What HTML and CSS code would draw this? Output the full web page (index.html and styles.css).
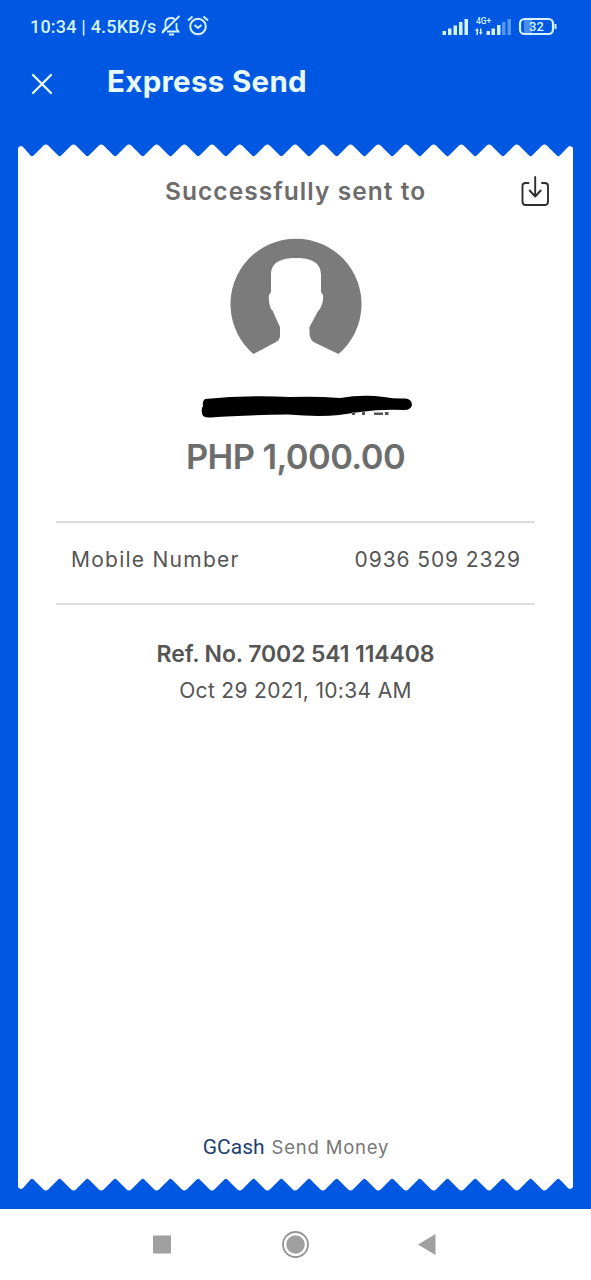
FILE: index.html
```html
<!DOCTYPE html>
<html lang="en">
<head>
<meta charset="utf-8">
<title>Express Send</title>
<link rel="stylesheet" href="styles.css">
</head>
<body>
<div class="screen">
  <header class="status">
    <span class="clock">10:34 | 4.5KB/s</span>
    <svg class="bell" width="20" height="22" viewBox="0 0 20 22" fill="none" stroke="currentColor" stroke-width="1.8">
      <path d="M4.500 13V8.500C4.500 5 6.500 3 10 3c1.500 0 2.700.5 3.600 1.200M15.500 8v5.500l2 3H6M1 18 18.500 1M1.500 16.500l3-3.500"/>
      <path d="M8 19.500h5" stroke-width="2"/>
    </svg>
    <svg class="alarm" width="22" height="22" viewBox="0 0 22 22" fill="none" stroke="currentColor" stroke-width="2">
      <circle cx="11" cy="11.500" r="7.800"/>
      <path d="M7.500 10l3.500 3 3.500-3M1 5.500 5.500 1.500M21 5.500 16.500 1.500"/>
    </svg>
    <svg class="signals" width="116" height="24" viewBox="0 0 116 24" fill="currentColor">
      <path d="M1.500 18h3.500v4H1.500zM7 15.500h3.500V22H7zM12.500 12.500H16V22h-3.500zM18 9h3.500v13H18zM23.500 6H27v16h-3.500z"/>
      <path d="M34 18l2-3 2 3h-1v4h-1.500v-4zM39 15.500h1.500v3.500h1l-1.700 3-1.800-3h1z"/>
      <path d="M45.500 18H49v4h-3.500zM50.500 15.500H54V22h-3.500zM56 12h3.500v10H56z"/>
      <path opacity=".4" d="M61 9h3.500v13H61zM66.500 6H70v16h-3.500z"/>
      <text class="net" x="35" y="11">4G+</text>
      <rect x="83" y="7" width="8" height="13" opacity=".35"/>
      <rect x="79" y="6" width="33" height="15" rx="4.500" fill="none" stroke="currentColor" stroke-width="2.200"/>
      <path d="M113.500 11h2v5h-2z"/>
      <text class="level" x="95.500" y="18.200" text-anchor="middle">32</text>
    </svg>
  </header>
  <nav class="bar">
    <svg class="close" width="22" height="22" viewBox="0 0 22 22" stroke="currentColor" stroke-width="2.300" stroke-linecap="round"><path d="M2 2l18 18M20 2 2 20"/></svg>
    <h1 class="title">Express Send</h1>
  </nav>
  <main class="receipt">
    <svg class="edge" viewBox="0 0 555 14" width="555" height="14">
      <path id="teeth" fill="#fff" d="M0 14V4Q3 0 6 4L12.500 11.500Q14 13 15.500 11.500l10-10q2.350-2 4.700 0l10 10q1.500 1.500 3 0l10-10q2.350-2 4.700 0l10 10q1.500 1.500 3 0l10-10q2.350-2 4.700 0l10 10q1.500 1.500 3 0l10-10q2.350-2 4.700 0l10 10q1.500 1.500 3 0l10-10q2.350-2 4.700 0l10 10q1.500 1.500 3 0l10-10q2.350-2 4.700 0l10 10q1.500 1.500 3 0l10-10q2.350-2 4.700 0l10 10q1.500 1.500 3 0l10-10q2.350-2 4.700 0l10 10q1.500 1.500 3 0l10-10q2.350-2 4.700 0l10 10q1.500 1.500 3 0l10-10q2.350-2 4.700 0l10 10q1.500 1.500 3 0l10-10q2.350-2 4.700 0l10 10q1.500 1.500 3 0l10-10q2.350-2 4.700 0l10 10q1.500 1.500 3 0l10-10q2.350-2 4.700 0l10 10q1.500 1.500 3 0l10-10q2.350-2 4.700 0l10 10q1.500 1.500 3 0l10-10q2.350-2 4.700 0l10 10q1.500 1.500 3 0l10-10q2.350-2 4.700 0l10 10q1.500 1.500 3 0l10-10q2.350-2 4.700 0l10 10q1.500 1.500 3 0l10-10q2.350-2 4.700 0l10 10q1.500 1.500 3 0l10-10q2.350-2 4.700 0l10 10q1.500 1.500 3 0L549 4Q552 0 555 4V14z"/>
    </svg>
    <div class="paper">
      <div class="heading">
        <h2 class="sent">Successfully sent to</h2>
        <svg class="download" width="28" height="32" viewBox="0 0 28 32" fill="none" stroke="#2d2d30" stroke-width="1.900" stroke-linecap="round" stroke-linejoin="round">
          <path d="M7.500 7H4.500Q1.500 7 1.500 10V25.500Q1.500 29 4.500 29H23.500Q27 29 27 25.500V10Q27 7 23.500 7H21M14.200 1V20.500M8.700 14.500l5.500 6 5.500-6"/>
        </svg>
      </div>
      <svg class="avatar" width="132" height="118" viewBox="0 0 132 118">
        <path fill="#7b7b7b" d="M23.500 116A65.500 65.500 0 1 1 108.500 116L83.500 104Q80 101 79.500 96V89L87 75Q88.500 72 90 71Q94 64 93 57L91 54L91 37C91 25 82 20 66 20S41 25 41 37V54L39 57Q38 64 41 71Q43 72 44 76L50 89V99Q49 102 47 103.500z"/>
      </svg>
      <div class="name">
        <svg width="214" height="26" viewBox="0 0 214 26">
          <path d="M5 4Q45 0 90 2Q115 1 140 3Q163-1 184 2Q195 4 205 3.500Q212 4 212 10Q211 15 204 15Q181 14 160 17L139 20Q118 22 88 19.500Q43 20 11 22.500Q2 23 2 18Q1 14 3 11Q2 6 5 4z"/>
          <path fill="#555" d="M152 17h3v3h-3zM162 17h3v3h-3zM174 17.500h9v2.500h-9zM185 17h3.500v3H185z"/>
        </svg>
      </div>
      <div class="amount">PHP 1,000.00</div>
      <div class="row">
        <span class="label">Mobile Number</span>
        <span class="number">0936 509 2329</span>
      </div>
      <div class="ref">Ref. No. 7002 541 114408</div>
      <div class="date">Oct 29 2021, 10:34 AM</div>
      <footer class="brand"><span class="gcash">GCash</span><span class="send">Send Money</span></footer>
    </div>
    <svg class="edge flipped" viewBox="0 0 555 14" width="555" height="14"><use href="#teeth"/></svg>
  </main>
  <div class="softkeys">
    <svg width="591" height="71" viewBox="0 0 591 71" fill="#a0a0a0">
      <path d="M153 26.500h18v18h-18zM418 35.500l17.500-10.500v21z"/>
      <circle cx="295.500" cy="35.500" r="9.300"/>
      <circle cx="295.500" cy="35.500" r="12.500" fill="none" stroke="#949494" stroke-width="1.800"/>
    </svg>
  </div>
</div>
</body>
</html>
```
FILE: styles.css
```css
* { box-sizing: border-box; margin: 0; padding: 0; }
svg { display: block; flex: none; }
body { font-family: Inter, "Liberation Sans", sans-serif; background: #fff; }
.screen { width: 591px; height: 1280px; background: #0057e1; display: flex; flex-direction: column; white-space: nowrap; overflow: hidden; }
.status { height: 52px; display: flex; align-items: center; padding: 0 34px 0 30px; color: #d3f4ff; }
.clock { font: 500 18px/24px Roboto, sans-serif; width: 131px; letter-spacing: .2px; padding-top: 1px; }
.alarm { margin-left: 6px; }
.signals { margin: -2px 0 0 auto; }
.net { font: 500 8.500px Roboto, sans-serif; }
.level { font: 500 13px Roboto, sans-serif; }
.bar { height: 92px; display: flex; align-items: flex-start; padding: 21px 0 0 31px; color: #e9faff; }
.title { font-size: 29.500px; line-height: 36px; font-weight: 650; margin: -10px 0 0 54px; letter-spacing: .3px; }
.receipt { width: 555px; margin-left: 18px; height: 1065px; display: flex; flex-direction: column; }
.edge { height: 14px; }
.flipped { transform: scaleY(-1); }
.paper { height: 1019px; background: #fff; display: flex; flex-direction: column; align-items: center; color: #555; }
.heading { width: 100%; height: 80px; display: grid; grid-template-columns: 1fr auto; padding: 18px 24px 0 147px; }
.sent { font-size: 24.500px; line-height: 30px; font-weight: 600; color: #6c6c6c; letter-spacing: 1.050px; }
.name { margin: 39px 0 0 22px; height: 41px; }
.amount { font-size: 34.500px; line-height: 42px; font-weight: 600; color: #6c6e6e; letter-spacing: -.6px; }
.row { width: 479px; height: 84px; margin-top: 43px; padding: 0 15px 8px; border-top: 2px solid #dcdcdc; border-bottom: 2px solid #dcdcdc; display: flex; justify-content: space-between; align-items: center; font-size: 21px; color: #555; }
.label { letter-spacing: 1.250px; }
.number { letter-spacing: .9px; margin-right: -1px; }
.ref { margin-top: 34px; font-size: 23px; line-height: 30px; font-weight: 600; letter-spacing: -.12px; }
.date { margin-top: 9px; font-size: 21px; line-height: 26px; letter-spacing: .330px; }
.brand { margin-top: auto; display: flex; align-items: center; height: 28px; margin: auto 0 16px 1px; gap: 7px; }
.gcash { font: 400 21px/30px Roboto, sans-serif; color: #1c3f70; }
.send { font-size: 18.500px; line-height: 26px; color: #777; letter-spacing: .8px; padding-bottom: 1px; }
.softkeys { height: 71px; background: #fff; }
```
